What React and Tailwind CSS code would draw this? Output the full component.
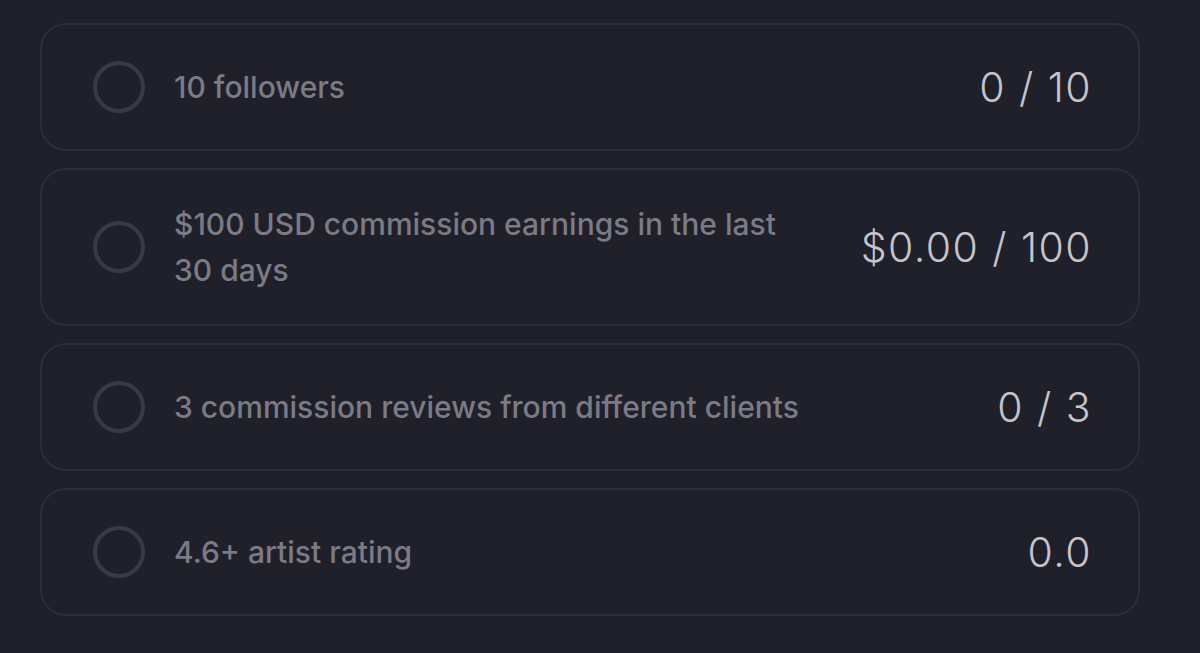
const goals = [
  { label: '10 followers', value: '0 / 10' },
  { label: '$100 USD commission earnings in the last 30 days', value: '$0.00 / 100' },
  { label: '3 commission reviews from different clients', value: '0 / 3' },
  { label: '4.6+ artist rating', value: '0.0' },
]

function GoalRow({ label, value }) {
  return (
    <div className="flex items-center min-h-[128px] py-[31px] pl-[51px] pr-[46px] rounded-[26px] border-2 border-[#2e2e3a] bg-[#20202b]">
      <div className="w-[52px] h-[52px] shrink-0 rounded-full border-[4px] border-[#3a3a46]" />
      <p className="ml-[29px] max-w-[637px] text-[30px] leading-[46px] font-medium text-[#7b7b86]">
        {label}
      </p>
      <div className="ml-auto pl-8 text-[41px] leading-none font-light tracking-[0.035em] text-[#c4c4cc] whitespace-nowrap">
        {value}
      </div>
    </div>
  )
}

export default function App() {
  return (
    <div className="min-h-screen bg-[#20202b] pt-[23px] pl-[40px]" style={{ fontFamily: 'Inter, "Noto Sans", sans-serif' }}>
      <div className="w-[1100px] flex flex-col gap-[17px]">
        {goals.map((g) => (
          <GoalRow key={g.label} label={g.label} value={g.value} />
        ))}
      </div>
    </div>
  )
}
